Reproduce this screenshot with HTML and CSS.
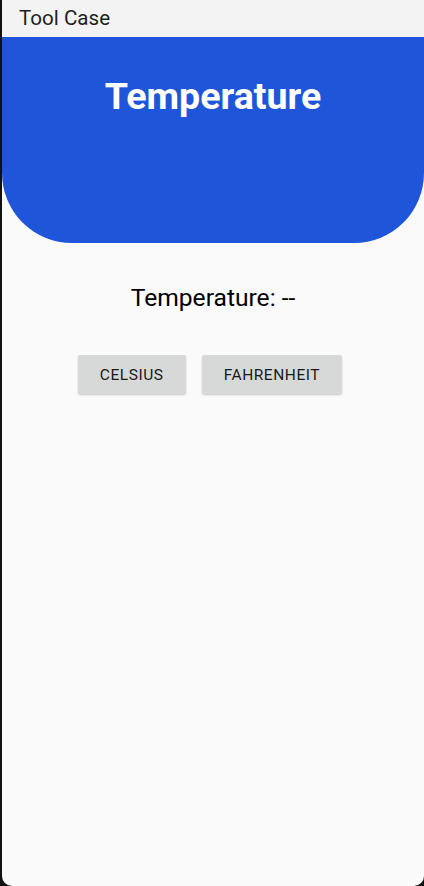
FILE: index.html
```html
<!DOCTYPE html>
<html lang="en">
<head>
<meta charset="utf-8">
<title>Tool Case</title>
<link rel="stylesheet" href="styles.css">
</head>
<body>
<div class="app">
  <div class="topbar">Tool Case</div>
  <header class="hero">
    <h1 class="hero-title">Temperature</h1>
  </header>
  <main class="content">
    <p class="reading">Temperature: --</p>
    <div class="buttons">
      <button class="btn">CELSIUS</button>
      <button class="btn">FAHRENHEIT</button>
    </div>
  </main>
</div>
</body>
</html>
```

FILE: styles.css
```css
html, body {
  margin: 0;
  padding: 0;
  background: #111111;
  height: 100%;
}
body {
  font-family: Roboto, "Noto Sans", sans-serif;
  padding-left: 2px;
  box-sizing: border-box;
}
.app {
  background: #fafafa;
  height: 886px;
  border-radius: 0 0 10px 10px;
  overflow: hidden;
  display: flex;
  flex-direction: column;
}
.topbar {
  height: 37px;
  background: #f3f3f3;
  color: #1f1f1f;
  font-size: 20.6px;
  line-height: 37px;
  padding-left: 17px;
}
.hero {
  height: 206px;
  background: #1f56d9;
  border-radius: 0 0 70px 70px;
  display: flex;
  justify-content: center;
}
.hero-title {
  margin: 37px 0 0;
  color: #ffffff;
  font-size: 37.6px;
  font-weight: 700;
  line-height: 44px;
  height: 44px;
}
.content {
  display: flex;
  flex-direction: column;
  align-items: center;
}
.reading {
  margin: 40px 0 0;
  font-size: 24.6px;
  line-height: 30px;
  color: #000;
}
.buttons {
  display: flex;
  gap: 16px;
  margin-top: 42px;
  margin-right: 6px;
}
.btn {
  font-family: Roboto, "Noto Sans", sans-serif;
  font-size: 15.5px;
  font-weight: 400;
  color: #1a1a1a;
  background: #d7d8d8;
  border: none;
  border-radius: 2px;
  height: 39px;
  padding: 0 22px;
  box-shadow: 0 1px 2px rgba(0,0,0,0.2);
  letter-spacing: 0.55px;
}
```
